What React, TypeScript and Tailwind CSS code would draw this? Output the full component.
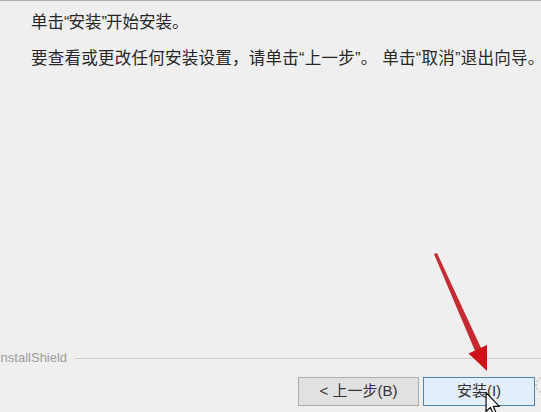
export default function App() {
  const cjk = { fontFamily: '"Liberation Sans", "Noto Sans CJK SC", sans-serif' }

  return (
    <div
      className="relative w-[541px] h-[412px] overflow-hidden bg-[#f0eff0] border-t border-[#a9b0b8] flex flex-col justify-between"
      style={cjk}
    >
      <div className="pl-[31px] pt-[11px] text-[16.5px] leading-[20px] text-[#262626]">
        <p>
          单击<span className="tracking-[-1px]">“</span>安装<span className="tracking-[-1px]">”</span>开始安装。
        </p>
        <p className="mt-[16px] whitespace-nowrap tracking-[0.25px]">
          要查看或更改任何安装设置，请单击“上一步”。 单击“取消”退出向导。
        </p>
      </div>

      <div>
        <div className="flex items-center h-[16px]">
          <span
            className="-ml-[3px] text-[13px] text-[#9c9c9c] leading-none"
            style={{ fontFamily: '"Liberation Sans", sans-serif' }}
          >
            InstallShield
          </span>
          <div className="flex-1 ml-[8px] mt-[3px] h-px bg-[#c9c9c9]" />
        </div>

        <div className="flex justify-end gap-[4px] mt-[12px] pr-[6px] pb-[6px]">
          <button className="w-[121px] h-[29px] bg-[#e1e1e1] border border-[#adadad] text-[15px] text-[#333] flex items-center justify-center">
            &lt; 上一步(B)
          </button>
          <button className="w-[112px] h-[29px] bg-[#e2effb] border border-[#4f86b8] text-[15px] text-[#333] flex items-center justify-center">
            安装(I)
          </button>
        </div>
      </div>

      {/* red annotation arrow */}
      <svg className="absolute left-0 top-0 pointer-events-none" width="541" height="412">
        <polygon points="434,253 437,252 481.5,348 475.5,351" fill="#c0141b" opacity="0.9" />
        <polygon points="487,370 487,344 468.5,352.5" fill="#cf111a" />
      </svg>

      {/* busy ring at right edge */}
      <svg className="absolute left-[530px] top-[373px] pointer-events-none" width="20" height="24">
        <circle cx="14" cy="11" r="8" fill="none" stroke="#9a9a9a" strokeWidth="1" strokeDasharray="2 2" />
      </svg>

      {/* mouse cursor */}
      <svg className="absolute left-[485px] top-[391px] pointer-events-none" width="16" height="24" viewBox="0 0 12 19">
        <path
          d="M0.5 0.5 L0.5 15.5 L4 12.2 L6.4 18 L8.6 17 L6.3 11.4 L11 11.4 Z"
          fill="#ffffff"
          stroke="#111111"
          strokeWidth="1"
          strokeLinejoin="round"
        />
      </svg>
    </div>
  )
}
